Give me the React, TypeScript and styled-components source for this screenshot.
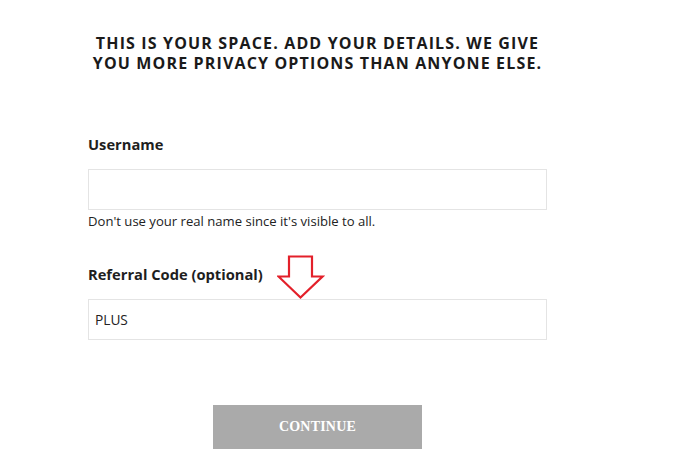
import React from "react";
import styled, { createGlobalStyle } from "styled-components";

const Global = createGlobalStyle`
  html, body { margin: 0; padding: 0; background: #ffffff; }
  body { font-family: "Open Sans", "Liberation Sans", sans-serif; color: #222; }
  * { box-sizing: border-box; }
`;

const Page = styled.div`
  width: 700px;
  height: 467px;
  padding: 33px 0 0 88px;
`;

const Form = styled.div`
  width: 459px;
  display: flex;
  flex-direction: column;
`;

const Heading = styled.h1`
  margin: 0;
  font-family: "Open Sans", sans-serif;
  font-weight: 700;
  font-size: 16px;
  line-height: 20px;
  letter-spacing: 1.15px;
  text-align: center;
  color: #1a1a1a;
`;

const Field = styled.div<{ $top: number }>`
  display: flex;
  flex-direction: column;
  margin-top: ${(p) => p.$top}px;
`;

const LabelRow = styled.div`
  position: relative;
  height: 20px;
`;

const Label = styled.label`
  font-family: "Open Sans", sans-serif;
  font-weight: 700;
  font-size: 14.7px;
  line-height: 20px;
  color: #1e1e1e;
`;

const Input = styled.div<{ $gap: number }>`
  margin-top: ${(p) => p.$gap}px;
  height: 41px;
  border: 1px solid #e4e4e4;
  background: #fff;
  display: flex;
  align-items: center;
  padding: 0 6px;
  font-family: "Open Sans", sans-serif;
  font-size: 13.7px;
  color: #222;
`;

const Hint = styled.div`
  margin-top: 2px;
  font-family: "Open Sans", sans-serif;
  font-size: 13.1px;
  line-height: 18px;
  color: #222;
`;

const Arrow = styled.svg`
  position: absolute;
  left: 188.5px;
  top: -8px;
`;

const ButtonRow = styled.div`
  display: flex;
  justify-content: center;
  margin-top: 65px;
`;

const Button = styled.button`
  width: 209px;
  height: 44px;
  border: none;
  background: #aaaaaa;
  color: #ffffff;
  font-family: "Liberation Serif", "Times New Roman", serif;
  font-weight: 700;
  font-size: 14px;
  letter-spacing: 0.2px;
  cursor: pointer;
`;

export default function App() {
  return (
    <>
      <Global />
      <Page>
        <Form>
          <Heading>
            THIS IS YOUR SPACE. ADD YOUR DETAILS. WE GIVE
            <br />
            YOU MORE PRIVACY OPTIONS THAN ANYONE ELSE.
          </Heading>
          <Field $top={60}>
            <LabelRow>
              <Label>Username</Label>
            </LabelRow>
            <Input $gap={16} />
            <Hint>Don't use your real name since it's visible to all.</Hint>
          </Field>
          <Field $top={33}>
            <LabelRow>
              <Label>Referral Code (optional)</Label>
              <Arrow width="48" height="46" viewBox="0 0 48 46">
                <path
                  d="M12 1.5 H35 V21.5 H45.5 L23.5 42.5 L1.5 21.5 H12 Z"
                  fill="none"
                  stroke="#e3202a"
                  strokeWidth="2.2"
                  strokeLinejoin="miter"
                />
              </Arrow>
            </LabelRow>
            <Input $gap={16}>PLUS</Input>
          </Field>
          <ButtonRow>
            <Button>CONTINUE</Button>
          </ButtonRow>
        </Form>
      </Page>
    </>
  );
}
